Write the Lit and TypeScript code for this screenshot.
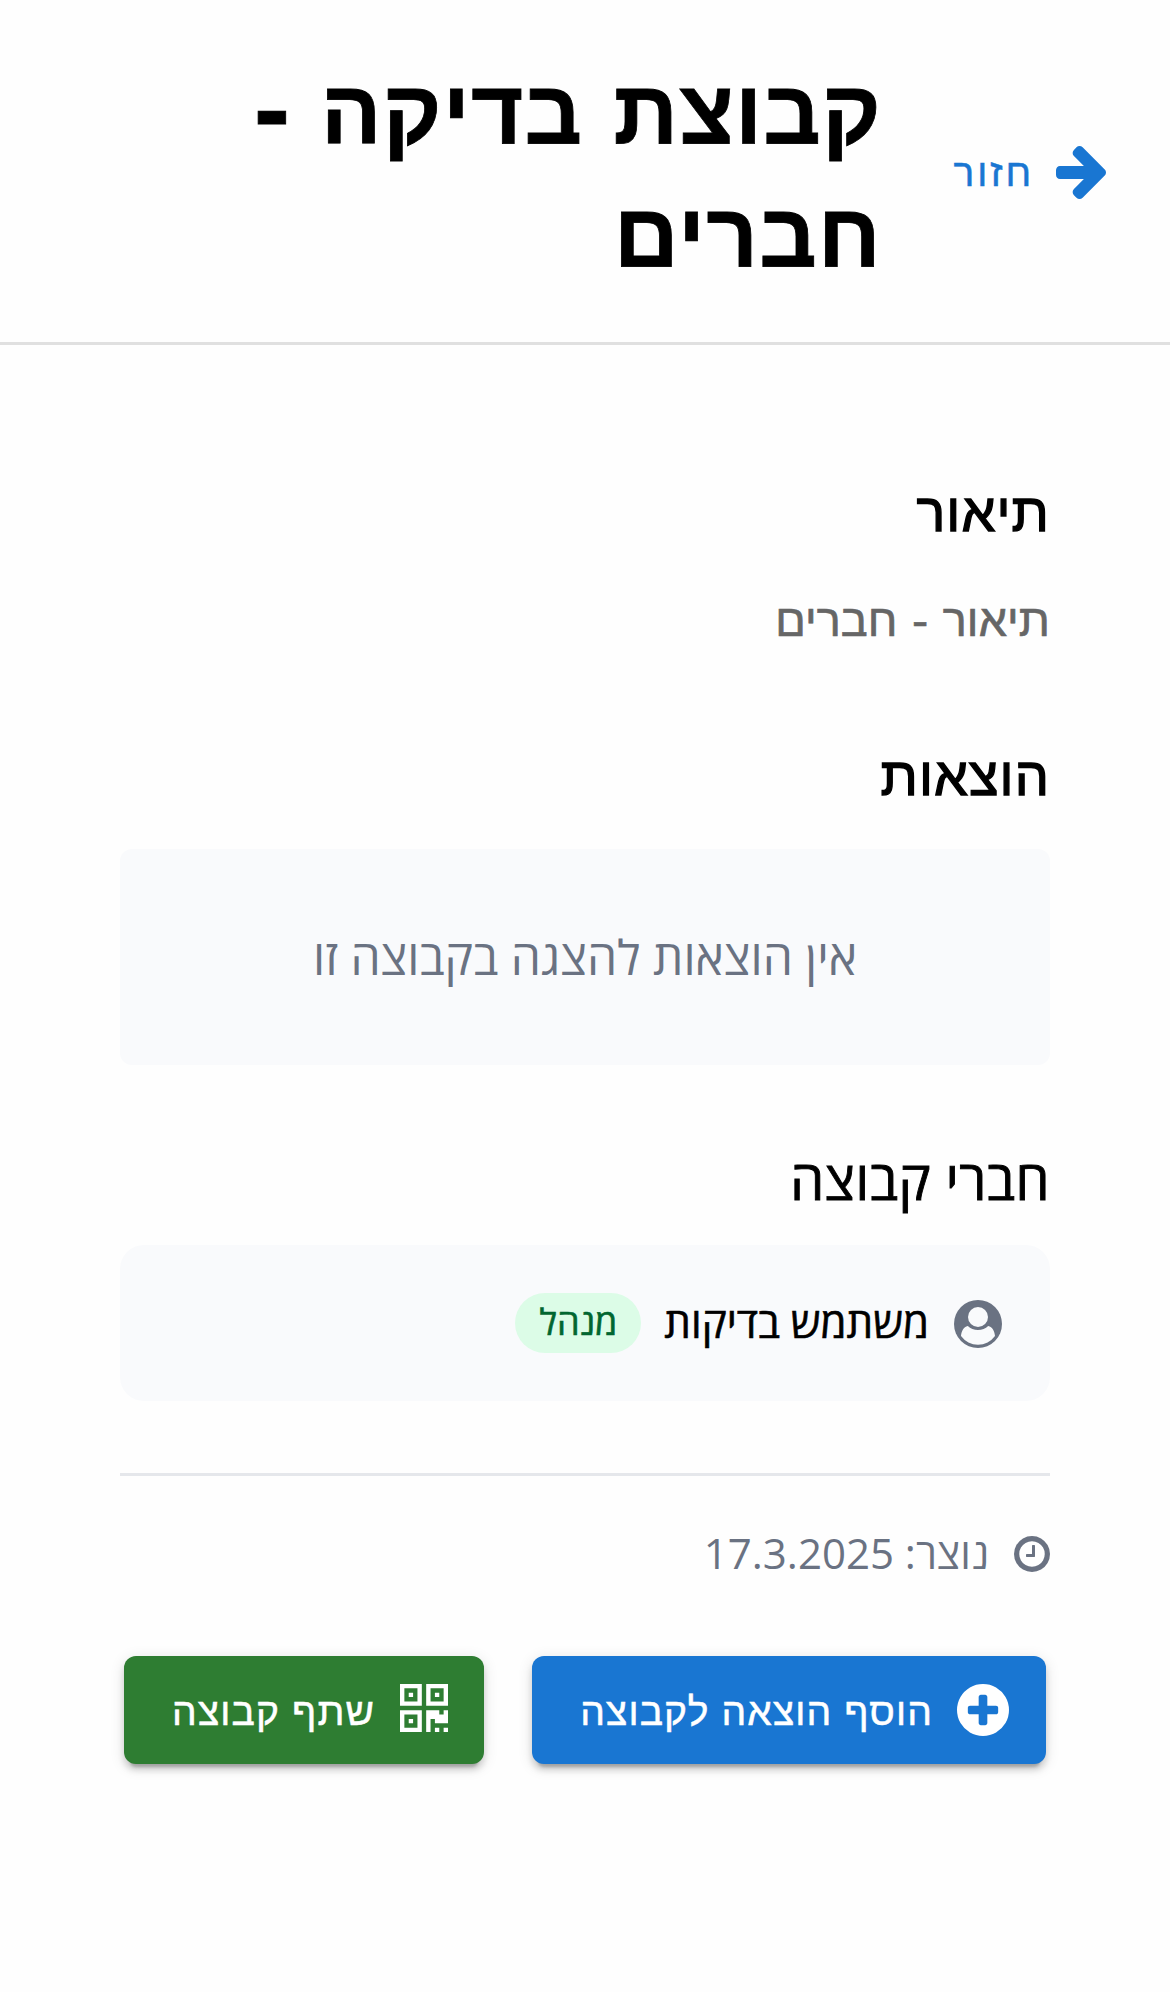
import { LitElement, html, css, svg } from "lit";
import { customElement } from "lit/decorators.js";

const arrow = svg`<path d="M1600 960q0 54-37 91l-651 651q-39 37-91 37-51 0-90-37l-75-75q-38-38-38-91t38-91l293-293h-704q-52 0-84.500-37.500t-32.500-90.500v-128q0-53 32.500-90.500t84.500-37.500h704l-293-294q-38-36-38-90t38-90l75-75q38-38 90-38 53 0 91 38l651 651q37 35 37 90z"/>`;
const clock = svg`<path d="M896 544v448q0 14-9 23t-23 9h-320q-14 0-23-9t-9-23v-64q0-14 9-23t23-9h224v-352q0-14 9-23t23-9h64q14 0 23 9t9 23zm416 352q0-148-73-273t-198-198-273-73-273 73-198 198-73 273 73 273 198 198 273 73 273-73 198-198 73-273zm224 0q0 209-103 385.500t-279.500 279.500-385.500 103-385.500-103-279.500-279.500-103-385.500 103-385.500 279.500-279.500 385.500-103 385.500 103 279.500 279.500 103 385.500z"/>`;
const plus = svg`<path d="M1344 960v-128q0-26-19-45t-45-19h-256v-256q0-26-19-45t-45-19h-128q-26 0-45 19t-19 45v256h-256q-26 0-45 19t-19 45v128q0 26 19 45t45 19h256v256q0 26 19 45t45 19h128q26 0 45-19t19-45v-256h256q26 0 45-19t19-45zm320-64q0 209-103 385.500t-279.500 279.500-385.500 103-385.500-103-279.500-279.500-103-385.500 103-385.500 279.500-279.500 385.500-103 385.500 103 279.500 279.500 103 385.500z"/>`;
const qr = svg`<path fill-rule="evenodd" d="M0 0h5v5h-5zM1 1v3h3v-3zM6 0h5v5h-5zM7 1v3h3v-3zM0 6h5v5h-5zM1 7v3h3v-3zM2 2h1v1h-1zM8 2h1v1h-1zM2 8h1v1h-1zM6 6h3v1h1v-1h1v3h-3v-1h-1v3h-1zM8 10h1v1h-1zM10 10h1v1h-1z"/>`;

@customElement("app-root")
export class AppRoot extends LitElement {
  static styles = css`
    :host { display: block; height: 1992px; background: #fefefe; color: #000; direction: rtl; font-family: "Open Sans", "Noto Sans", sans-serif; font-weight: 400; }
    * { box-sizing: border-box; }
    svg { display: block; fill: currentColor; flex: none; }
    h1, h2, p { margin: 0; }
    .sans { font-family: "Liberation Sans", "Noto Sans", sans-serif; }
    .wide { font-family: "DejaVu Sans", sans-serif; }
    header { height: 345px; border-bottom: 3px solid #e0e0e0; padding: 48px 48px 0; display: flex; }
    .back { display: flex; align-items: center; width: 180px; height: 249px; color: #1976d2; font-size: 39px; letter-spacing: 2.8px; padding: 0 16.5px; gap: 21.5px; -webkit-text-stroke: 0.5px currentColor; white-space: nowrap; }
    .back svg, .btn svg { stroke: none; }
    h1 { width: 640px; margin-right: 60px; padding-top: 3px; font-size: 90px; line-height: 123px; font-weight: 700; letter-spacing: 1.1px; -webkit-text-stroke: 0.8px currentColor; }
    h1 .wide { letter-spacing: 0; word-spacing: -1px; }
    main { padding: 128px 120px 0; }
    h2 { font-size: 54px; line-height: 78px; font-weight: 400; letter-spacing: 1.1px; -webkit-text-stroke: 1.3px currentColor; }
    .desc { margin-top: 37px; font-size: 45px; line-height: 66px; letter-spacing: 0.1px; color: #666; -webkit-text-stroke: 0.7px currentColor; }
    .h-exp { margin: 83px 0 34px; }
    .h-mem { margin: 75px 0 27px; letter-spacing: 0.55px; -webkit-text-stroke: 0.9px currentColor; }
    .empty { height: 216px; padding-bottom: 2px; display: flex; align-items: center; justify-content: center; background: #f9fafc; border-radius: 12px; color: #6a7282; font-size: 48px; }
    .member { height: 156px; background: #f9fafc; border-radius: 24px; padding: 0 48px; display: flex; align-items: center; font-size: 42px; }
    .avatar { color: #6a7282; margin-top: 2px; }
    .tag { height: 60px; line-height: 57px; padding: 0 24px; border-radius: 30px; background: #dcfce7; color: #016630; font-size: 36px; margin-right: 23px; -webkit-text-stroke: 0.6px currentColor; }
    .name { margin: 0 25px 4px 0; -webkit-text-stroke: 0.6px currentColor; }
    .meta { margin-top: 72px; border-top: 3px solid #e5e7eb; padding-top: 48px; height: 183px; display: flex; align-items: flex-start; gap: 25px; color: #6a7282; font-size: 42px; line-height: 60px; }
    .meta svg { margin-top: 12px; }
    .meta span { margin-top: -1px; }
    .actions { display: flex; gap: 48px; padding: 0 4px; }
    .btn { height: 108px; border-radius: 12px; color: #fff; display: flex; align-items: center; gap: 24px; padding: 0 37px; font-size: 39px; letter-spacing: 1.1px; box-shadow: 0 9px 3px -6px rgba(0,0,0,.2), 0 6px 6px rgba(0,0,0,.14), 0 3px 15px rgba(0,0,0,.12); white-space: nowrap; -webkit-text-stroke: 0.5px currentColor; }
    .btn span { padding-top: 3px; }
    .add { width: 514px; background: #1976d2; }
    .share { width: 360px; padding: 0 36px; gap: 25px; background: #2e7d32; }
    .share svg { margin-bottom: 5px; }
  `;
  render() {
    return html`
      <header>
        <div class="back sans"><svg width="50" height="53" viewBox="128 181 1472 1558">${arrow}</svg><span>חזור</span></div>
        <h1 class="sans">קבוצת<span class="wide"> </span>בדיקה<span class="wide"> - </span>חברים</h1>
      </header>
      <main>
        <h2 class="sans">תיאור</h2>
        <p class="desc sans">תיאור<span class="wide"> - </span>חברים</p>
        <h2 class="h-exp sans">הוצאות</h2>
        <div class="empty">אין הוצאות להצגה בקבוצה זו</div>
        <h2 class="h-mem">חברי קבוצה</h2>
        <div class="member">
          <svg class="avatar" width="48" height="48" viewBox="0 0 48 48">
            <circle cx="24" cy="24" r="24"/>
            <circle cx="24" cy="17" r="10" fill="#f9fafc"/>
            <path fill="#f9fafc" d="M7 36C7.500 31 9.500 27 13.800 26C16.500 28.800 20 30 24 30S31.500 28.800 34.200 26C38.500 27 40.500 31 41 36A21 21 0 0 1 7 36Z"/>
          </svg>
          <span class="name">משתמש בדיקות</span><span class="tag">מנהל</span>
        </div>
        <div class="meta"><svg width="36" height="36" viewBox="0 128 1536 1536">${clock}</svg><span>נוצר: 17.3.2025</span></div>
        <div class="actions">
          <div class="btn add sans"><svg width="52" height="52" viewBox="128 128 1536 1536">${plus}</svg><span>הוסף הוצאה לקבוצה</span></div>
          <div class="btn share sans"><svg width="48" height="48" viewBox="0 0 11 11">${qr}</svg><span>שתף קבוצה</span></div>
        </div>
      </main>`;
  }
}
